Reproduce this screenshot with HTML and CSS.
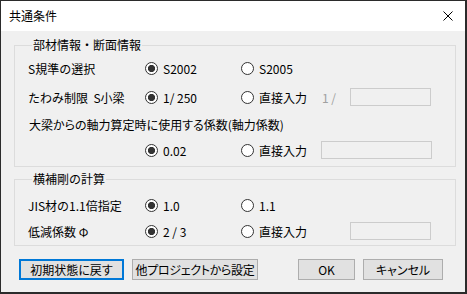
FILE: index.html
```html
<!DOCTYPE html>
<html lang="ja">
<head>
  <meta charset="UTF-8" />
  <title>共通条件</title>
  <link rel="stylesheet" href="styles.css">
</head>
<body>
  <div class="window">
    <div class="titlebar">
      <span class="title">共通条件</span>
      <svg class="close" width="10" height="10" viewBox="0 0 10 10">
        <path d="M0.5 0.5 L9.5 9.5 M9.5 0.5 L0.5 9.5" stroke="#000" stroke-width="1" fill="none"/>
      </svg>
    </div>

    <div class="content">
      <fieldset class="group group-a">
        <legend>部材情報・断面情報</legend>
        <div class="row">
          <span class="label">S規準の選択</span>
          <label class="radio on"><span class="dot"></span>S2002</label>
          <label class="radio"><span class="dot"></span>S2005</label>
        </div>
        <div class="row gap-a">
          <span class="label">たわみ制限&nbsp;&nbsp;S小梁</span>
          <label class="radio on"><span class="dot"></span>1/ 250</label>
          <label class="radio"><span class="dot"></span>直接入力</label>
          <span class="extra"><span class="muted">1 /</span><span class="field short"></span></span>
        </div>
        <div class="note">大梁からの軸力算定時に使用する係数(軸力係数)</div>
        <div class="row gap-b">
          <span class="label"></span>
          <label class="radio on"><span class="dot"></span>0.02</label>
          <label class="radio"><span class="dot"></span>直接入力</label>
          <span class="extra"><span class="field wide"></span></span>
        </div>
      </fieldset>

      <fieldset class="group group-b">
        <legend>横補剛の計算</legend>
        <div class="row">
          <span class="label">JIS材の1.1倍指定</span>
          <label class="radio on"><span class="dot"></span>1.0</label>
          <label class="radio"><span class="dot"></span>1.1</label>
        </div>
        <div class="row gap-c">
          <span class="label">低減係数 Φ</span>
          <label class="radio on"><span class="dot"></span>2 / 3</label>
          <label class="radio"><span class="dot"></span>直接入力</label>
          <span class="extra"><span class="field short"></span></span>
        </div>
      </fieldset>

      <div class="buttons">
        <button class="btn focused reset">初期状態に戻す</button>
        <button class="btn other">他プロジェクトから設定</button>
        <button class="btn ok">OK</button>
        <button class="btn cancel">キャンセル</button>
      </div>
    </div>
  </div>
</body>
</html>
```

FILE: styles.css
```css
body {
  margin: 0;
  font-family: "Noto Sans CJK JP", "Noto Sans", sans-serif;
  font-size: 12px;
  color: #000;
  background: #fff;
}

.window {
  width: 464px;
  height: 291px;
  border-style: solid;
  border-color: #2b2b2b;
  border-width: 1px 2px 2px 1px;
  background: #f0f0f0;
  overflow: hidden;
}

.titlebar {
  height: 30px;
  background: #fff;
  display: flex;
  align-items: center;
  padding: 0 12px 0 8px;
}

.title {
  flex: 1;
  line-height: 16px;
}

.close {
  display: block;
}

.content {
  padding: 6px 9px 0 13px;
}

.group {
  margin: 0;
  padding: 5px 0 6px 13px;
  border: 1px solid #dcdcdc;
  min-width: 0;
}

.group legend {
  padding: 0 1px;
  margin-left: 4px;
  line-height: 16px;
}

.group-b {
  margin-top: 4px;
  padding: 8px 0 4px 13px;
}

.row {
  display: grid;
  grid-template-columns: 117px 96px 80px 111px;
  align-items: center;
  height: 20px;
}

.gap-a { margin-top: 9px; }
.gap-b { margin-top: 5px; }
.gap-c { margin-top: 6px; }

.note {
  margin-top: 8px;
  padding-left: 1px;
  line-height: 20px;
  height: 20px;
  font-feature-settings: "palt";
}

.radio {
  display: flex;
  align-items: center;
  gap: 5px;
  white-space: nowrap;
}

.dot {
  width: 11px;
  height: 11px;
  border: 1px solid #333;
  border-radius: 50%;
  background: #fff;
  flex: none;
}

.radio.on .dot {
  background: radial-gradient(circle, #333 0, #333 3.3px, #fff 3.9px);
}

.extra {
  display: flex;
  align-items: center;
}

.muted {
  color: #a0a0a0;
  padding-left: 1px;
}

.field {
  height: 16px;
  border: 1px solid #cccccc;
  background: #f0f0f0;
  margin-left: auto;
}

.field.short { width: 79px; margin-right: 1px; }
.field.wide { width: 109px; }

.buttons {
  display: flex;
  margin-top: 13px;
  padding-left: 5px;
}

.btn {
  font-family: inherit;
  font-size: 12px;
  height: 21px;
  padding: 0;
  background: #e1e1e1;
  border: 1px solid #adadad;
  color: #000;
  line-height: 17px;
  white-space: nowrap;
  font-feature-settings: "palt";
}

.btn.focused {
  border: 2px solid #0078d7;
}

.reset { width: 105px; }
.other { width: 126px; margin-left: 8px; letter-spacing: -0.3px; }
.ok { width: 57px; margin-left: 40px; }
.cancel { width: 80px; margin-left: 8px; }
```
